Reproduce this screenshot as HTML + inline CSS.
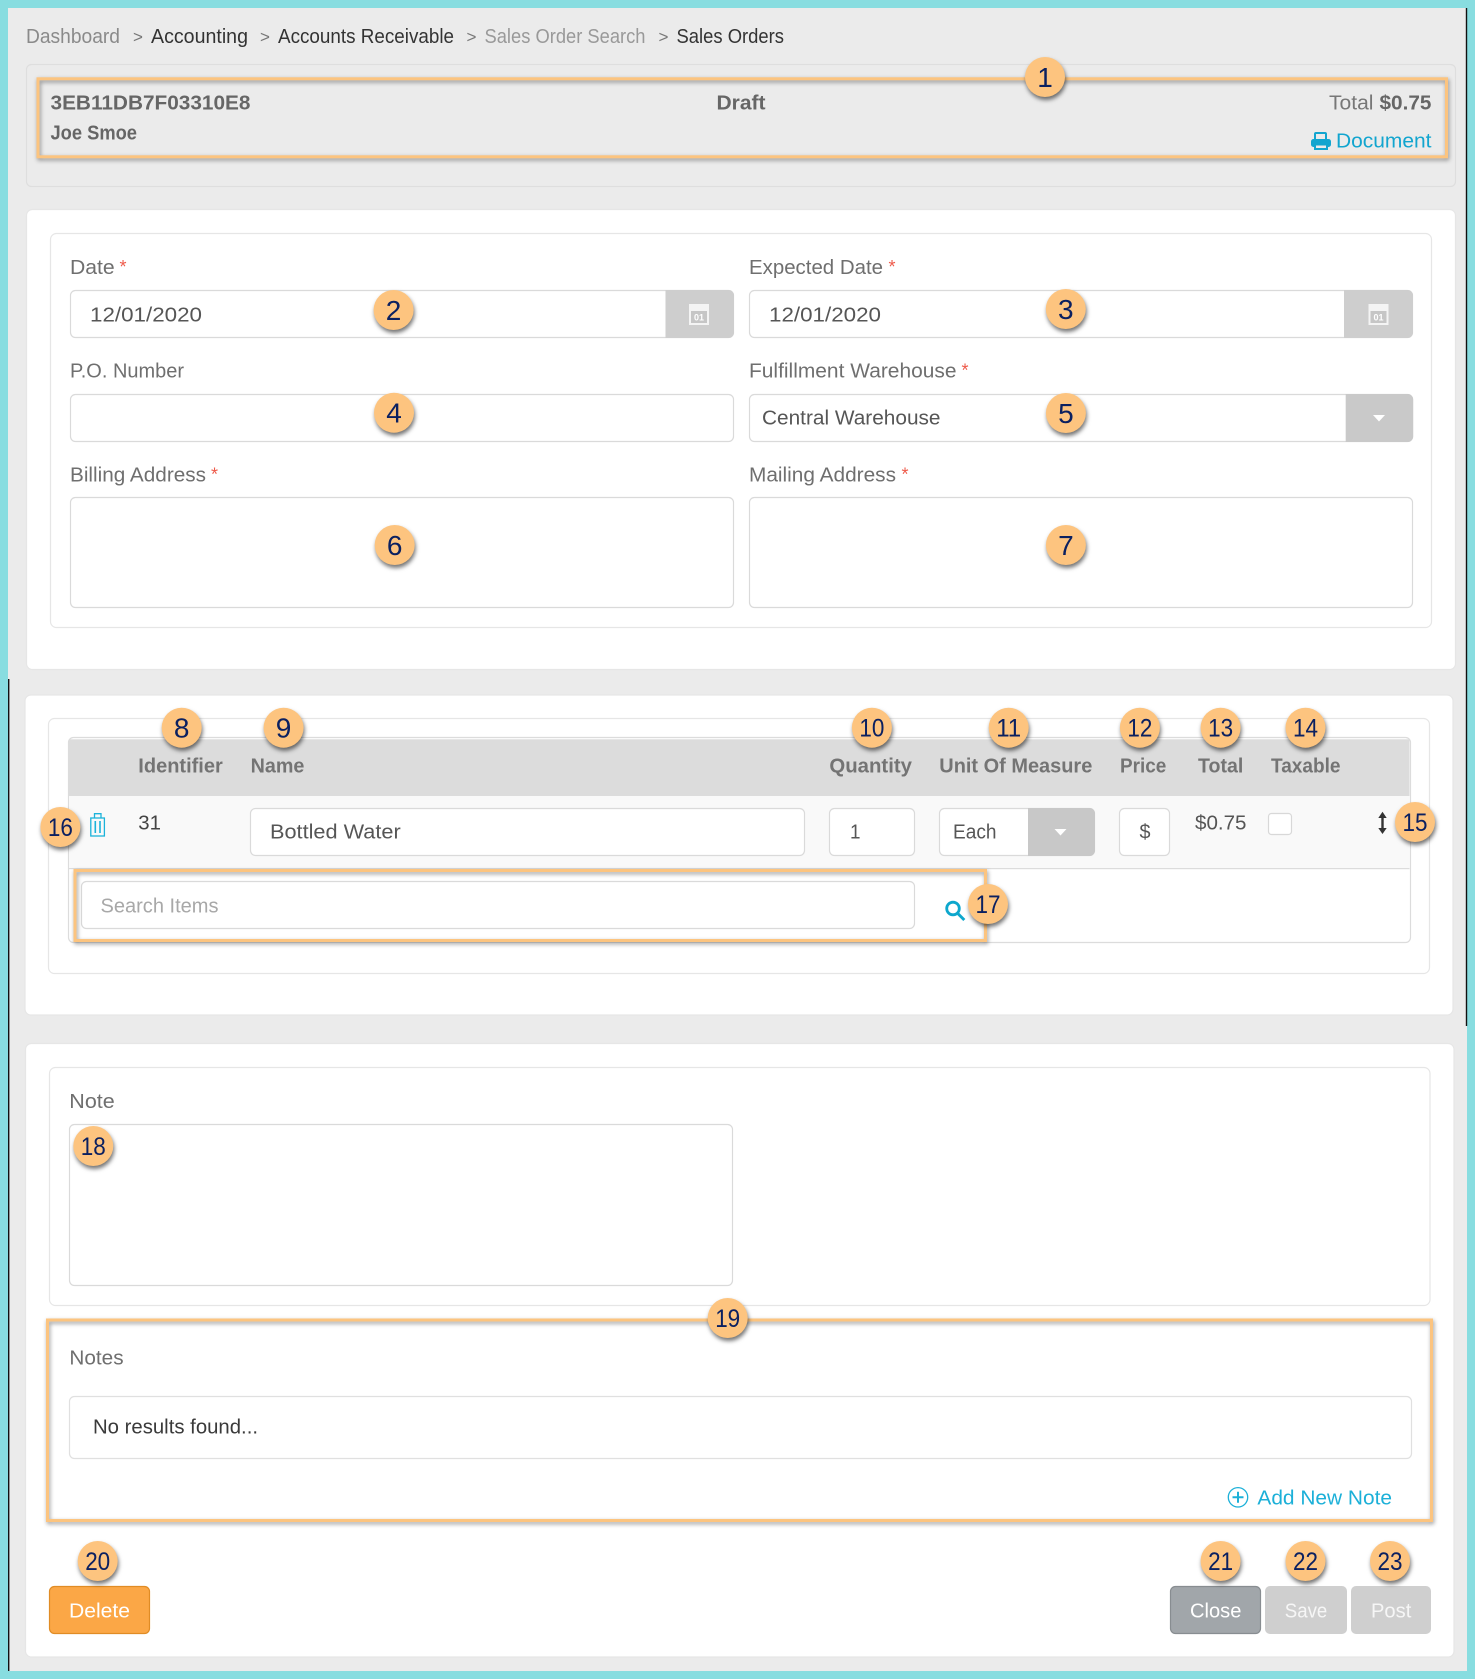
<!DOCTYPE html>
<html lang="en">
<head>
<meta charset="utf-8">
<title>Sales Orders</title>
<style>
html,body{margin:0;padding:0;background:#ebebeb}
svg{display:block}
text{font-family:"Liberation Sans",Arial,sans-serif;font-size:20.5px}
.b{font-weight:700}
.l{fill:#6f6f6f}
.i{fill:#565656}
.h{fill:#747474;font-weight:700}
.ast{fill:#ee5a4a;font-size:18px}
.n{fill:#0b2060;font-size:28px;text-anchor:middle}
.n2{fill:#0b2060;font-size:25px;text-anchor:middle}
.f{fill:#fff;stroke:#dadada;stroke-width:1.2}
.p{fill:#fff;stroke:#e6e6e6;stroke-width:1.2}
.o{fill:none;stroke:#fcc47f;stroke-width:3;filter:drop-shadow(1px 2px 2px rgba(0,0,0,.42))}
.c{fill:#fdc47f;filter:drop-shadow(1px 3px 2px rgba(0,0,0,.55))}
</style>
</head>
<body>
<svg xmlns="http://www.w3.org/2000/svg" width="1475" height="1679" viewBox="0 0 1475 1679">
<rect width="1475" height="1679" fill="#88dde0"/>
<rect x="8" y="8" width="1459" height="1663" fill="#ebebeb"/>
<rect x="8" y="679" width="1.4" height="992" fill="#111"/>
<rect x="1465.8" y="8" width="1.4" height="1018" fill="#111"/>

<!-- Breadcrumb -->
<text x="26" y="43" fill="#8a8a8a" textLength="94" lengthAdjust="spacingAndGlyphs">Dashboard</text>
<text x="133" y="42.500" fill="#777" style="font-size:17px">&gt;</text>
<text x="151" y="43" fill="#333" textLength="97" lengthAdjust="spacingAndGlyphs">Accounting</text>
<text x="260" y="42.500" fill="#777" style="font-size:17px">&gt;</text>
<text x="278" y="43" fill="#333" textLength="176" lengthAdjust="spacingAndGlyphs">Accounts Receivable</text>
<text x="466.5" y="42.500" fill="#777" style="font-size:17px">&gt;</text>
<text x="484.5" y="43" fill="#999" textLength="161" lengthAdjust="spacingAndGlyphs">Sales Order Search</text>
<text x="658.5" y="42.500" fill="#777" style="font-size:17px">&gt;</text>
<text x="676.5" y="43" fill="#333" textLength="107.5" lengthAdjust="spacingAndGlyphs">Sales Orders</text>

<!-- Header panel -->
<rect x="26.5" y="64.5" width="1429" height="122" rx="5" fill="#ebebeb" stroke="#dedede" stroke-width="1.2"/>
<text x="50.5" y="109.500" class="b" fill="#666" textLength="200" lengthAdjust="spacingAndGlyphs">3EB11DB7F03310E8</text>
<text x="50.5" y="139.500" class="b" fill="#666" textLength="86.5" lengthAdjust="spacingAndGlyphs">Joe Smoe</text>
<text x="716.5" y="109.500" class="b" fill="#666" textLength="49" lengthAdjust="spacingAndGlyphs">Draft</text>
<text x="1329" y="109.500" fill="#777" textLength="44.5" lengthAdjust="spacingAndGlyphs">Total</text>
<text x="1379.5" y="109.500" class="b" fill="#666" textLength="52" lengthAdjust="spacingAndGlyphs">$0.75</text>
<g>
<rect x="1315" y="133" width="11" height="8" rx="1" fill="none" stroke="#12a5cf" stroke-width="2"/>
<rect x="1311" y="139" width="20" height="8" rx="2.5" fill="#12a5cf"/>
<rect x="1315" y="144.5" width="12" height="4.5" fill="#ebebeb" stroke="#12a5cf" stroke-width="2"/>
</g>
<text x="1336" y="147.500" fill="#12a5cf" textLength="95.5" lengthAdjust="spacingAndGlyphs">Document</text>

<!-- Form panel -->
<rect x="26.5" y="209.5" width="1429" height="460" rx="6" class="p"/>
<rect x="50.5" y="233.5" width="1381" height="394" rx="6" class="p"/>

<text x="70" y="274" class="l" textLength="44.7" lengthAdjust="spacingAndGlyphs">Date</text>
<text x="119.5" y="273" class="ast">*</text>
<rect x="70.5" y="290.5" width="663" height="47" rx="5" class="f"/>
<path d="M665.5 290h63a5.500 5.500 0 0 1 5.500 5.500v37a5.500 5.500 0 0 1-5.500 5.500h-63z" fill="#cecece"/>
<text x="90" y="321.300" class="i" textLength="112" lengthAdjust="spacingAndGlyphs">12/01/2020</text>
<g>
<rect x="689" y="304" width="20" height="21" fill="#f4f4f4"/>
<rect x="691" y="311" width="16" height="12" fill="#c6c6c6"/>
<text x="699" y="320.500" text-anchor="middle" fill="#fff" style="font-size:9px" class="b">01</text>
</g>

<text x="749" y="274" class="l" textLength="134" lengthAdjust="spacingAndGlyphs">Expected Date</text>
<text x="888.5" y="273" class="ast">*</text>
<rect x="749.500" y="290.5" width="663" height="47" rx="5" class="f"/>
<path d="M1344 290h63.500a5.500 5.500 0 0 1 5.500 5.500v37a5.500 5.500 0 0 1-5.500 5.500h-63.500z" fill="#cecece"/>
<text x="769" y="321.300" class="i" textLength="112" lengthAdjust="spacingAndGlyphs">12/01/2020</text>
<g>
<rect x="1368.500" y="304" width="20" height="21" fill="#f4f4f4"/>
<rect x="1370.500" y="311" width="16" height="12" fill="#c6c6c6"/>
<text x="1378.500" y="320.500" text-anchor="middle" fill="#fff" style="font-size:9px" class="b">01</text>
</g>

<text x="70" y="377.300" class="l" textLength="114" lengthAdjust="spacingAndGlyphs">P.O. Number</text>
<rect x="70.5" y="394.5" width="663" height="47" rx="5" class="f"/>

<text x="749" y="377.300" class="l" textLength="207.500" lengthAdjust="spacingAndGlyphs">Fulfillment Warehouse</text>
<text x="961.500" y="376.300" class="ast">*</text>
<rect x="749.500" y="394.5" width="663" height="47" rx="5" class="f"/>
<path d="M1345.700 394h62a5.500 5.500 0 0 1 5.500 5.500v37a5.500 5.500 0 0 1-5.500 5.500h-62z" fill="#c9c9c9"/>
<path d="M1373 415h12l-6 6.500z" fill="#fff"/>
<text x="762" y="424.500" class="i" textLength="178.500" lengthAdjust="spacingAndGlyphs">Central Warehouse</text>

<text x="70" y="481.300" class="l" textLength="136" lengthAdjust="spacingAndGlyphs">Billing Address</text>
<text x="211" y="480.300" class="ast">*</text>
<rect x="70.5" y="497.5" width="663" height="110" rx="5" class="f"/>
<text x="749" y="481.300" class="l" textLength="147" lengthAdjust="spacingAndGlyphs">Mailing Address</text>
<text x="901.500" y="480.300" class="ast">*</text>
<rect x="749.500" y="497.5" width="663" height="110" rx="5" class="f"/>

<!-- Items panel -->
<rect x="25" y="695" width="1428" height="320" rx="6" class="p"/>
<rect x="48.500" y="718.5" width="1381" height="255" rx="6" class="p"/>
<rect x="68.5" y="737.5" width="1342" height="205" rx="5" fill="#fff" stroke="#dcdcdc" stroke-width="1.2"/>
<rect x="69" y="739.300" width="1340.500" height="56.700" fill="#dcdcdc"/>
<rect x="69" y="796" width="1340.500" height="72" fill="#f9f9f9"/>
<rect x="69" y="868" width="1340.500" height="1.200" fill="#dcdcdc"/>

<text x="138.300" y="772.300" class="h" textLength="84.500" lengthAdjust="spacingAndGlyphs">Identifier</text>
<text x="250.600" y="772.300" class="h" textLength="53.800" lengthAdjust="spacingAndGlyphs">Name</text>
<text x="829.400" y="772.300" class="h" textLength="82.600" lengthAdjust="spacingAndGlyphs">Quantity</text>
<text x="939.300" y="772.300" class="h" textLength="153" lengthAdjust="spacingAndGlyphs">Unit Of Measure</text>
<text x="1120" y="772.300" class="h" textLength="46.300" lengthAdjust="spacingAndGlyphs">Price</text>
<text x="1198" y="772.300" class="h" textLength="45.300" lengthAdjust="spacingAndGlyphs">Total</text>
<text x="1271" y="772.300" class="h" textLength="69.500" lengthAdjust="spacingAndGlyphs">Taxable</text>

<g fill="none" stroke="#1cb3da" stroke-width="1.300">
<path d="M94.500 818v-4.300h6.500v4.300"/>
<rect x="90.800" y="818" width="13.600" height="18"/>
<path d="M95.300 821v12M100 821v12" stroke-width="1.600"/>
</g>
<text x="138.300" y="829.700" fill="#444" textLength="22.700" lengthAdjust="spacingAndGlyphs">31</text>

<rect x="250.500" y="808.500" width="554" height="47" rx="5" class="f"/>
<text x="270" y="838.700" class="i" textLength="130.700" lengthAdjust="spacingAndGlyphs">Bottled Water</text>
<rect x="829.500" y="808.500" width="85" height="47" rx="5" class="f"/>
<text x="850" y="838.700" class="i" textLength="10.500" lengthAdjust="spacingAndGlyphs">1</text>
<rect x="939.500" y="808.500" width="155" height="47" rx="5" class="f"/>
<path d="M1028 808h61.500a5.500 5.500 0 0 1 5.500 5.500v37a5.500 5.500 0 0 1-5.500 5.500H1028z" fill="#c8c8c8"/>
<path d="M1054.500 829h12l-6 6.500z" fill="#fff"/>
<text x="953" y="838.700" class="i" textLength="43.500" lengthAdjust="spacingAndGlyphs">Each</text>
<rect x="1119.500" y="808.500" width="50" height="47" rx="5" class="f"/>
<text x="1139.500" y="838.700" class="i" textLength="11" lengthAdjust="spacingAndGlyphs">$</text>
<text x="1195" y="829.700" fill="#555" textLength="51.500" lengthAdjust="spacingAndGlyphs">$0.75</text>
<rect x="1268.500" y="813.500" width="23" height="21" rx="3" fill="#fff" stroke="#d8d8d8" stroke-width="1.200"/>
<path d="M1382.500 816v14" stroke="#333" stroke-width="2.400"/>
<path d="M1378.300 818l4.200-6.300 4.200 6.300zM1378.300 828l4.200 6 4.200-6z" fill="#333"/>

<rect x="81.500" y="881.500" width="833" height="47" rx="5" class="f"/>
<text x="100.500" y="912.300" fill="#a8a8a8" textLength="118" lengthAdjust="spacingAndGlyphs">Search Items</text>
<g fill="none" stroke="#0da7cd">
<circle cx="953" cy="908.500" r="6.300" stroke-width="2.800"/>
<path d="M957.800 913.500l6.500 6.500" stroke-width="3"/>
</g>
<rect x="75" y="870.500" width="910.500" height="70" class="o"/>

<!-- Notes panel -->
<rect x="25.500" y="1043.500" width="1428.500" height="613.500" rx="6" class="p"/>
<rect x="49.500" y="1067.500" width="1380.500" height="238" rx="6" class="p"/>
<text x="69.300" y="1108" class="l" textLength="45.400" lengthAdjust="spacingAndGlyphs">Note</text>
<rect x="69.500" y="1124.500" width="663" height="161" rx="5" class="f"/>

<text x="69.400" y="1364.300" class="l" textLength="54.200" lengthAdjust="spacingAndGlyphs">Notes</text>
<rect x="69.500" y="1396.500" width="1342" height="62" rx="5" fill="#fff" stroke="#e0e0e0" stroke-width="1.200"/>
<text x="93" y="1433.500" fill="#3a3a3a" textLength="165" lengthAdjust="spacingAndGlyphs">No results found...</text>
<g fill="none" stroke="#1cb0d8">
<circle cx="1238" cy="1497.300" r="9.700" stroke-width="1.300"/>
<path d="M1232.500 1497.300h11M1238 1491.800v11" stroke-width="2"/>
</g>
<text x="1257.400" y="1504.700" fill="#1cb0d8" textLength="134.600" lengthAdjust="spacingAndGlyphs">Add New Note</text>
<rect x="47.500" y="1320" width="1384" height="200.500" class="o"/>

<!-- Buttons -->
<rect x="49.500" y="1586.500" width="100" height="47" rx="5" fill="#fba746" stroke="#e08c25" stroke-width="1.200"/>
<text x="69" y="1617.300" fill="#fff" textLength="61" lengthAdjust="spacingAndGlyphs">Delete</text>
<rect x="1170.500" y="1586.500" width="90" height="47" rx="5" fill="#a1a6aa" stroke="#888d91" stroke-width="1.200"/>
<text x="1190" y="1617.300" fill="#fff" textLength="51.400" lengthAdjust="spacingAndGlyphs">Close</text>
<rect x="1265" y="1586" width="82" height="48" rx="5" fill="#cfcfcf"/>
<text x="1284.800" y="1617.300" fill="#f6f6f6" textLength="42.500" lengthAdjust="spacingAndGlyphs">Save</text>
<rect x="1351" y="1586" width="80" height="48" rx="5" fill="#cfcfcf"/>
<text x="1371" y="1617.300" fill="#f6f6f6" textLength="40.300" lengthAdjust="spacingAndGlyphs">Post</text>
<rect x="38" y="78.800" width="1408.500" height="78" class="o"/>

<!-- Badges -->
<circle class="c" cx="1045" cy="77" r="20"/><text class="n" x="1045" y="87">1</text>
<circle class="c" cx="393.600" cy="310" r="20"/><text class="n" x="393.600" y="320">2</text>
<circle class="c" cx="1065.800" cy="309" r="20"/><text class="n" x="1065.800" y="319">3</text>
<circle class="c" cx="394" cy="412.700" r="20"/><text class="n" x="394" y="422.700">4</text>
<circle class="c" cx="1065.900" cy="413" r="20"/><text class="n" x="1065.900" y="423">5</text>
<circle class="c" cx="394.700" cy="545" r="20"/><text class="n" x="394.700" y="555">6</text>
<circle class="c" cx="1065.900" cy="545" r="20"/><text class="n" x="1065.900" y="555">7</text>
<circle class="c" cx="181.700" cy="727.700" r="20"/><text class="n" x="181.700" y="737.700">8</text>
<circle class="c" cx="283.600" cy="727.700" r="20"/><text class="n" x="283.600" y="737.700">9</text>
<circle class="c" cx="871.900" cy="727.700" r="20"/><text class="n2" x="871.900" y="736.500" textLength="25" lengthAdjust="spacingAndGlyphs">10</text>
<circle class="c" cx="1008.700" cy="727.700" r="20"/><text class="n2" x="1008.700" y="736.500" textLength="25" lengthAdjust="spacingAndGlyphs">11</text>
<circle class="c" cx="1139.900" cy="727.700" r="20"/><text class="n2" x="1139.900" y="736.500" textLength="25" lengthAdjust="spacingAndGlyphs">12</text>
<circle class="c" cx="1220.600" cy="727.700" r="20"/><text class="n2" x="1220.600" y="736.500" textLength="25" lengthAdjust="spacingAndGlyphs">13</text>
<circle class="c" cx="1305.500" cy="727.700" r="20"/><text class="n2" x="1305.500" y="736.500" textLength="25" lengthAdjust="spacingAndGlyphs">14</text>
<circle class="c" cx="1415" cy="822" r="20"/><text class="n2" x="1415" y="830.800" textLength="25" lengthAdjust="spacingAndGlyphs">15</text>
<circle class="c" cx="60.400" cy="827" r="20"/><text class="n2" x="60.400" y="835.800" textLength="25" lengthAdjust="spacingAndGlyphs">16</text>
<circle class="c" cx="988" cy="904" r="20"/><text class="n2" x="988" y="912.800" textLength="25" lengthAdjust="spacingAndGlyphs">17</text>
<circle class="c" cx="93.300" cy="1146" r="20"/><text class="n2" x="93.300" y="1154.800" textLength="25" lengthAdjust="spacingAndGlyphs">18</text>
<circle class="c" cx="727.700" cy="1318" r="20"/><text class="n2" x="727.700" y="1326.800" textLength="25" lengthAdjust="spacingAndGlyphs">19</text>
<circle class="c" cx="97.700" cy="1561" r="20"/><text class="n2" x="97.700" y="1569.800" textLength="25" lengthAdjust="spacingAndGlyphs">20</text>
<circle class="c" cx="1220.600" cy="1561" r="20"/><text class="n2" x="1220.600" y="1569.800" textLength="25" lengthAdjust="spacingAndGlyphs">21</text>
<circle class="c" cx="1305.500" cy="1561" r="20"/><text class="n2" x="1305.500" y="1569.800" textLength="25" lengthAdjust="spacingAndGlyphs">22</text>
<circle class="c" cx="1390" cy="1561" r="20"/><text class="n2" x="1390" y="1569.800" textLength="25" lengthAdjust="spacingAndGlyphs">23</text>
</svg>
</body>
</html>
